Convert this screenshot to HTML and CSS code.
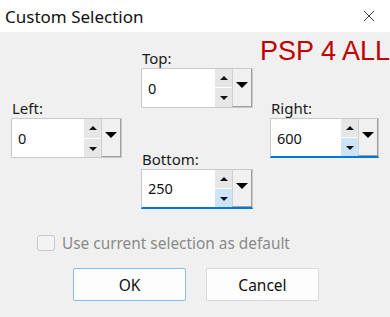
FILE: index.html
```html
<!DOCTYPE html>
<html>
<head lang="en">
  <meta charset="UTF-8">
  <title>Custom Selection</title>
  <link rel="stylesheet" href="styles.css">
</head>
<body>
  <div class="dialog">
    <div class="titlebar">
      <span class="title">Custom Selection</span>
      <svg class="close" width="12" height="12" viewBox="0 0 12 12">
        <path d="M1 1 L11 11 M11 1 L1 11" stroke="#444" stroke-width="1" fill="none"/>
      </svg>
    </div>
    <div class="content">
      <div class="brand">PSP 4 ALL</div>
      <div class="grid">
        <div class="col col1">
          <div class="group">
            <label>Left:</label>
            <div class="spin">
              <span class="field">0</span>
              <span class="arrows"><i class="up"></i><i class="down"></i></span>
              <span class="drop"><i></i></span>
            </div>
          </div>
        </div>
        <div class="col col2">
          <div class="group">
            <label>Top:</label>
            <div class="spin">
              <span class="field">0</span>
              <span class="arrows"><i class="up"></i><i class="down"></i></span>
              <span class="drop"><i></i></span>
            </div>
          </div>
          <div class="group">
            <label>Bottom:</label>
            <div class="spin focus">
              <span class="field">250</span>
              <span class="arrows"><i class="up"></i><i class="down hot"></i></span>
              <span class="drop"><i></i></span>
            </div>
          </div>
        </div>
        <div class="col col3">
          <div class="group">
            <label>Right:</label>
            <div class="spin focus">
              <span class="field">600</span>
              <span class="arrows"><i class="up"></i><i class="down hot"></i></span>
              <span class="drop"><i></i></span>
            </div>
          </div>
        </div>
      </div>
      <div class="check">
        <span class="box"></span>
        <span class="check-text">Use current selection as default</span>
      </div>
      <div class="buttons">
        <button class="btn default">OK</button>
        <button class="btn">Cancel</button>
      </div>
    </div>
  </div>
</body>
</html>
```

FILE: styles.css
```css
* {
  margin: 0;
  padding: 0;
  box-sizing: border-box;
}
body {
  width: 390px;
  height: 317px;
  overflow: hidden;
  font-family: "Noto Sans", "Open Sans", sans-serif;
  color: #1a1a1a;
  background: #f0f0f0;
}
.titlebar {
  height: 32px;
  background: #fff;
  display: flex;
  align-items: center;
  justify-content: space-between;
  padding: 0 15px 0 5px;
}
.title {
  font-size: 17px;
  color: #111;
}
.close {
  display: block;
}
.content {
  position: relative;
  height: 285px;
  padding-top: 16px;
}
.brand {
  position: absolute;
  top: 4px;
  left: 260px;
  white-space: nowrap;
  font-family: "Liberation Sans", Arial, sans-serif;
  font-size: 27px;
  color: #c00000;
  line-height: 30px;
}
.grid {
  display: flex;
  align-items: center;
  padding-left: 11px;
  height: 161px;
}
.col1 {
  width: 111px;
}
.col2 {
  width: 112px;
  margin-left: 19px;
  display: flex;
  flex-direction: column;
  gap: 42px;
}
.col3 {
  width: 109px;
  margin-left: 17px;
}
label {
  display: block;
  font-size: 15px;
  line-height: 18px;
  height: 18px;
  margin-bottom: 1px;
  padding-left: 1px;
  color: #1a1a1a;
}
.spin {
  display: flex;
  height: 40px;
  border: 1px solid #c9c9c9;
  background: #fff;
}
.spin.focus {
  border-bottom: 2px solid #0078d7;
}
.field {
  flex: 1;
  display: flex;
  align-items: center;
  padding-left: 6px;
  font-size: 14.5px;
  color: #111;
}
.arrows {
  width: 17px;
  display: flex;
  flex-direction: column;
  gap: 1px;
  background: #fff;
}
.arrows i {
  flex: 1;
  background: #e6e6e6;
  position: relative;
}
.arrows i::after {
  content: "";
  position: absolute;
  left: 5px;
  top: 7px;
  border-left: 4px solid transparent;
  border-right: 4px solid transparent;
}
.arrows i.up::after {
  border-bottom: 4px solid #111;
}
.arrows i.down::after {
  top: 8px;
  border-top: 4px solid #111;
}
.arrows i.hot {
  background: #cce4f7;
}
.drop {
  width: 20px;
  background: #f0f0f0;
  border-left: 1px solid #d0d0d0;
  border-right: 1px solid #a0a0a0;
  border-bottom: 1px solid #a0a0a0;
  display: flex;
  justify-content: center;
  padding-top: 13px;
}
.drop i {
  width: 0;
  height: 0;
  border-left: 6px solid transparent;
  border-right: 6px solid transparent;
  border-top: 6px solid #000;
}
.check {
  display: flex;
  align-items: center;
  margin: 26px 0 0 37px;
  height: 16px;
}
.box {
  width: 18px;
  height: 16px;
  border: 1px solid #c8c8c8;
  border-radius: 3px;
  background: #f3f3f3;
}
.check-text {
  margin-left: 7px;
  font-size: 15.4px;
  color: #8a8a8a;
}
.buttons {
  display: flex;
  gap: 20px;
  margin: 17px 0 0 73px;
}
.btn {
  width: 113px;
  height: 33px;
  font-family: "Noto Sans", "Open Sans", sans-serif;
  font-size: 15.5px;
  color: #111;
  background: #fdfdfd;
  border: 1px solid #dadada;
  border-radius: 2px;
}
.btn.default {
  border-color: #8bbbe8;
}
```
